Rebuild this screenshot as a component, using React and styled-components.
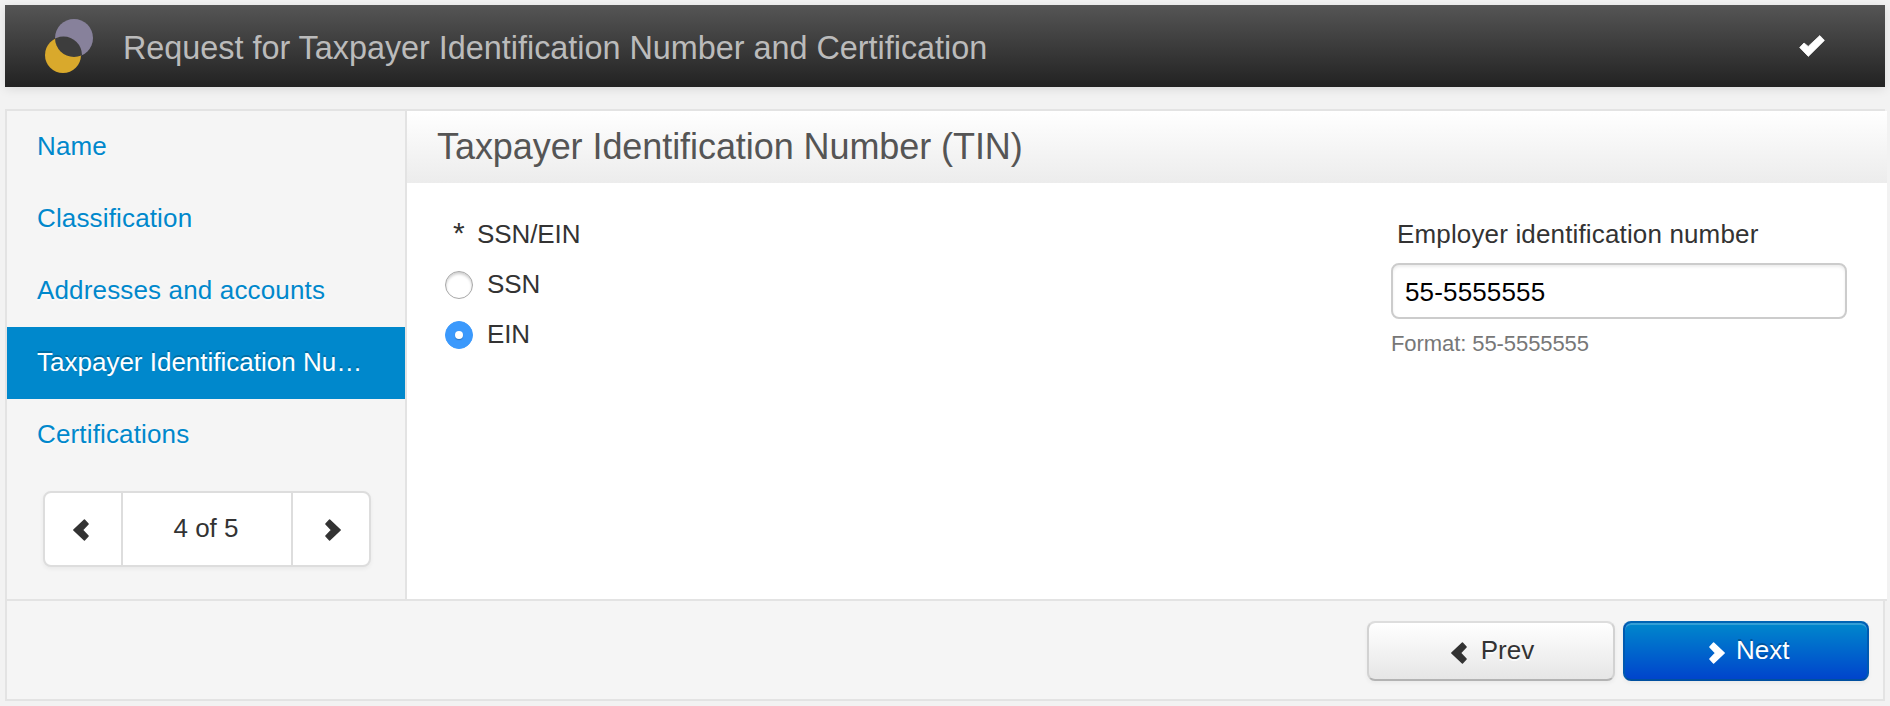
import React, { useState } from "react";
import styled, { createGlobalStyle, css } from "styled-components";

const GlobalStyle = createGlobalStyle`
  * { box-sizing: border-box; }
  html { background: #f2f2f2; }
  body {
    margin: 0;
    color: #333;
    font-family: "Liberation Sans", Arial, sans-serif;
    font-size: 26px;
    line-height: 40px;
    letter-spacing: 0.15px;
    overflow: hidden;
  }
`;

const Page = styled.div`
  width: 1890px;
  height: 706px;
  padding: 5px;
`;

const TopBar = styled.header`
  display: flex;
  align-items: center;
  height: 82px;
  padding: 0 60px 0 40px;
  background: linear-gradient(#555, #222);
  box-shadow: 0 2px 10px rgba(0, 0, 0, 0.1);
`;

const Brand = styled.h1`
  flex: 1;
  margin: 0 0 0 30px;
  padding-top: 4px;
  color: #bbb;
  font-size: 32.4px;
  font-weight: 400;
  letter-spacing: -0.02px;
`;

const Wizard = styled.main`
  margin-top: 22px;
  width: 1880px;
  border-top: 2px solid #e3e3e3;
`;

const Columns = styled.div`
  display: flex;
  width: 1882px;
  height: 488px;
`;

const Sidebar = styled.aside`
  width: 402px;
  flex: none;
  background: #f5f5f5;
  border: solid #e3e3e3;
  border-width: 0 2px;
`;

const StepLink = styled.a`
  display: block;
  height: 72px;
  padding: 0 30px;
  line-height: 70px;
  white-space: nowrap;
  overflow: hidden;
  text-overflow: ellipsis;
  text-decoration: none;
  cursor: pointer;
  color: #08c;
  text-shadow: 0 2px 0 rgba(255, 255, 255, 0.5);
  ${(p) =>
    p.$active &&
    css`
      color: #fff;
      background: #08c;
      letter-spacing: 0;
      text-shadow: 0 -2px 0 rgba(0, 0, 0, 0.2);
    `}
`;

const Pager = styled.div`
  display: flex;
  width: 328px;
  height: 76px;
  margin: 20px 0 0 36px;
  background: #fff;
  border: 2px solid #ddd;
  border-radius: 8px;
  box-shadow: 0 2px 4px rgba(0, 0, 0, 0.05);
`;

const PagerButton = styled.button`
  display: flex;
  align-items: center;
  justify-content: center;
  width: 76px;
  padding: ${(p) => (p.$next ? "2px 0 0 4px" : "2px 4px 0 0")};
  border: 0;
  background: none;
  color: #333;
`;

const PagerCount = styled.span`
  flex: 1;
  border: solid #ddd;
  border-width: 0 2px;
  padding-right: 2px;
  letter-spacing: 0;
  line-height: 70px;
  text-align: center;
`;

const Content = styled.section`
  flex: 1;
  background: #fff;
`;

const Heading = styled.h2`
  height: 72px;
  margin: 0;
  padding-left: 30px;
  background: linear-gradient(#fff, #ececec);
  color: #555;
  font-size: 36px;
  font-weight: 400;
  letter-spacing: -0.07px;
  line-height: 72px;
`;

const Form = styled.div`
  display: flex;
  justify-content: space-between;
  padding: 31px 40px 0 38px;
`;

const Field = styled.div`
  display: flex;
  flex-direction: column;
  width: ${(p) => p.$width};
`;

const Label = styled.label`
  padding-left: ${(p) => p.$indent};
  letter-spacing: ${(p) => p.$tracking};
`;

const Required = styled.span`
  margin-right: 12.5px;
  font-size: 30px;
  line-height: 1;
`;

const Option = styled.label`
  display: flex;
  align-items: center;
  gap: 14px;
  height: 50px;
  letter-spacing: -0.1px;
`;

const OptionList = styled.div`
  margin-top: 5px;
`;

const Radio = styled.input`
  appearance: none;
  display: grid;
  place-items: center;
  width: 28px;
  height: 28px;
  margin: 1px 0 0;
  border: 1px solid #a8a8a8;
  border-radius: 50%;
  background: #fff;
  box-shadow: inset 0 2px 3px rgba(0, 0, 0, 0.2);
  &:checked {
    border-color: #3b99fc;
    background: #3b99fc;
    box-shadow: none;
  }
  &:checked::after {
    content: "";
    width: 8px;
    height: 8px;
    border-radius: 50%;
    background: #fff;
    box-shadow: 0 1px 1px rgba(0, 0, 0, 0.25);
  }
`;

const TextInput = styled.input`
  height: 56px;
  margin-top: 9px;
  padding: 2px 12px 0;
  border: 2px solid #ccc;
  border-radius: 8px;
  background: #fff;
  color: #000;
  font: inherit;
  letter-spacing: 0.15px;
  box-shadow: inset 0 2px 3px rgba(0, 0, 0, 0.075);
`;

const Hint = styled.span`
  margin-top: 5px;
  color: #777;
  font-size: 22px;
  letter-spacing: -0.08px;
`;

const Footer = styled.footer`
  display: flex;
  justify-content: flex-end;
  gap: 8px;
  height: 100px;
  padding: 20px 14px 0 0;
  background: #f5f5f5;
  border: solid #e3e3e3;
  border-width: 0 2px 2px;
`;

const FooterLine = styled.div`
  width: 1882px;
  height: 2px;
  background: #e3e3e3;
`;

const Button = styled.button`
  display: flex;
  align-items: center;
  justify-content: center;
  gap: 14px;
  width: ${(p) => (p.$primary ? "246px" : "248px")};
  height: 60px;
  padding: ${(p) => (p.$primary ? "0 0 0 6px" : "0 0 0 3px")};
  border: 2px solid;
  border-radius: 8px;
  font: inherit;
  letter-spacing: 0;
  ${(p) =>
    p.$primary
      ? css`
          gap: 11.5px;
          color: #fff;
          border-color: #0064b4 #005ab0 #0050a0;
          background: linear-gradient(#08c, #04c) padding-box, #04c;
          text-shadow: 0 -2px 0 rgba(0, 0, 0, 0.25);
        `
      : css`
          color: #333;
          border-color: #ddd #d2d2d2 #b3b3b3;
          background: linear-gradient(#fff, #e6e6e6) padding-box, #e6e6e6;
          text-shadow: 0 2px 0 rgba(255, 255, 255, 0.75);
        `}
  box-shadow: inset 0 2px 0 rgba(255, 255, 255, 0.2), 0 2px 4px rgba(0, 0, 0, 0.05);
  & > svg { margin-top: 3px; }
`;

const ButtonText = styled.span`
  padding-bottom: 2px;
`;

const Logo = () => (
  <svg width="48" height="54" viewBox="0 0 48 54">
    <circle cx="29" cy="19" r="19" fill="#87819b" />
    <circle cx="18" cy="36" r="18" fill="#d9a92c" />
    <clipPath id="lens">
      <circle cx="29" cy="19" r="19" />
    </clipPath>
    <circle cx="18.5" cy="36" r="18.5" fill="#3d3d3d" clipPath="url(#lens)" />
  </svg>
);

const CheckIcon = () => (
  <svg width="26" height="22" viewBox="0 0 26 22">
    <path d="M5 8 L9.2 11.4 L20.8 .6 L25.4 5.4 L9.3 21.4 L.7 12.5Z" fill="#fff" stroke="#fff" strokeWidth=".8" strokeLinejoin="round" />
  </svg>
);

const Chevron = ({ right }) => (
  <svg width="16" height="22" viewBox="0 0 16 22">
    <path
      d={right ? "M4.6 .9 L15.2 11 L4.6 21.1 L.9 17 L6.6 11 L.9 5Z" : "M11.4 .9 L.8 11 L11.4 21.1 L15.1 17 L9.4 11 L15.1 5Z"}
      fill="currentColor"
      stroke="currentColor"
      strokeWidth="1.4"
      strokeLinejoin="round"
    />
  </svg>
);

const steps = [
  "Name",
  "Classification",
  "Addresses and accounts",
  "Taxpayer Identification Number (TIN)",
  "Certifications",
];

export default function App() {
  const [kind, setKind] = useState("EIN");
  const [ein, setEin] = useState("55-5555555");
  return (
    <Page>
      <GlobalStyle />
      <TopBar>
        <Logo />
        <Brand>Request for Taxpayer Identification Number and Certification</Brand>
        <CheckIcon />
      </TopBar>
      <Wizard>
        <Columns>
          <Sidebar>
            {steps.map((s, i) => (
              <StepLink key={s} $active={i === 3}>{s}</StepLink>
            ))}
            <Pager>
              <PagerButton aria-label="Previous"><Chevron /></PagerButton>
              <PagerCount>4 of 5</PagerCount>
              <PagerButton $next aria-label="Next"><Chevron right /></PagerButton>
            </Pager>
          </Sidebar>
          <Content>
            <Heading>Taxpayer Identification Number (TIN)</Heading>
            <Form>
              <Field $width="300px">
                <Label as="span" $indent="8px" $tracking="-0.1px">
                  <Required>*</Required>SSN/EIN
                </Label>
                <OptionList>
                  {["SSN", "EIN"].map((k) => (
                    <Option key={k}>
                      <Radio type="radio" name="kind" checked={kind === k} onChange={() => setKind(k)} />
                      {k}
                    </Option>
                  ))}
                </OptionList>
              </Field>
              <Field $width="456px">
                <Label htmlFor="ein" $indent="6px" $tracking="0.15px">Employer identification number</Label>
                <TextInput id="ein" value={ein} onChange={(e) => setEin(e.target.value)} />
                <Hint>Format: 55-5555555</Hint>
              </Field>
            </Form>
          </Content>
        </Columns>
        <FooterLine />
        <Footer>
          <Button><Chevron /><ButtonText>Prev</ButtonText></Button>
          <Button $primary><Chevron right /><ButtonText>Next</ButtonText></Button>
        </Footer>
      </Wizard>
    </Page>
  );
}
